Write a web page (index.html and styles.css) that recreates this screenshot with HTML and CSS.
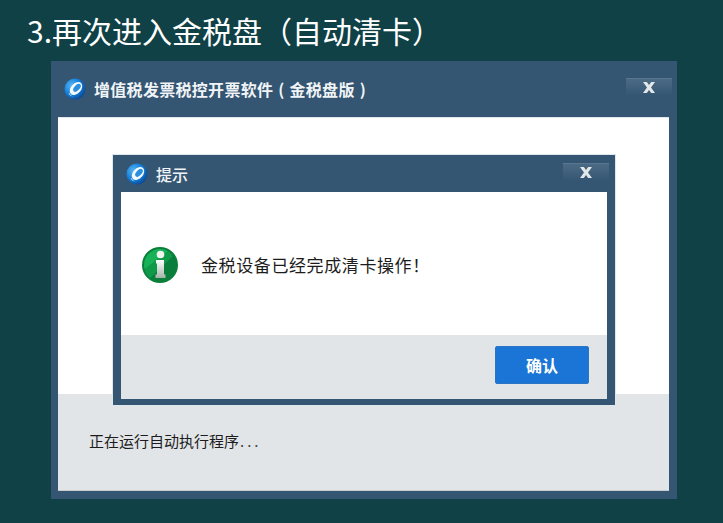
FILE: index.html
```html
<!DOCTYPE html>
<html lang="zh-CN">
<head>
<meta charset="utf-8">
<title>再次进入金税盘</title>
<link rel="stylesheet" href="styles.css">
</head>
<body>
<svg class="defs" width="0" height="0" aria-hidden="true">
  <defs>
    <radialGradient id="orb" cx="35%" cy="35%" r="75%">
      <stop offset="0" stop-color="#5db8f2"/>
      <stop offset=".55" stop-color="#137fdc"/>
      <stop offset="1" stop-color="#0a3f86"/>
    </radialGradient>
    <symbol id="logo" viewBox="0 0 22 22">
      <circle cx="11" cy="11" r="10.500" fill="url(#orb)"/>
      <ellipse cx="12" cy="10.500" rx="7.500" ry="5" transform="rotate(-48 12 10.500)" fill="#f4fbff"/>
      <ellipse cx="13" cy="9.800" rx="4.800" ry="2.600" transform="rotate(-48 13 9.800)" fill="#2a8fe0"/>
      <path d="M4.500 15.500c1 2.200 3 3.200 5.500 3-2-.3-3.600-1.300-4.300-3.500z" fill="#9ed6f8"/>
    </symbol>
    <symbol id="close" viewBox="0 0 12 11">
      <path d="M0 0h3.800L6 3 8.200 0H12L8 5.500 12 11H8.200L6 8 3.800 11H0L4 5.500z" fill="#e4e7ea"/>
    </symbol>
  </defs>
</svg>

<h1 class="heading">3.再次进入金税盘（自动清卡）</h1>

<section class="window">
  <header class="titlebar">
    <svg class="logo"><use href="#logo"/></svg>
    <span class="title">增值税发票税控开票软件 ( 金税盘版 )</span>
    <span class="close"><svg class="close-x"><use href="#close"/></svg></span>
  </header>
  <div class="window-body">
    <div class="window-white"></div>
    <footer class="window-footer">正在运行自动执行程序<span class="dots">...</span></footer>
  </div>

  <section class="dialog">
    <header class="dialog-bar">
      <svg class="logo"><use href="#logo"/></svg>
      <span class="dialog-title">提示</span>
      <span class="close"><svg class="close-x"><use href="#close"/></svg></span>
    </header>
    <div class="dialog-body">
      <div class="message">
        <svg class="info" viewBox="0 0 36 36">
          <defs>
            <linearGradient id="stem" x1="0" y1="0" x2="0" y2="1">
              <stop offset="0" stop-color="#fff"/>
              <stop offset="1" stop-color="#a3b3a8"/>
            </linearGradient>
          </defs>
          <circle cx="18" cy="18" r="18" fill="#0a7f3c"/>
          <path d="M18 2A16 16 0 0 0 2 18c0 1.500.2 3 .6 4.500L26 4.200A16 16 0 0 0 18 2z" fill="#17b257"/>
          <path d="M2.600 22.500 26 4.200c2 1.300 3.600 3 4.800 5L8 31C5.400 29 3.500 26 2.600 22.500z" fill="#0f9a4a"/>
          <circle cx="18.500" cy="7.500" r="3.800" fill="#f0f5f0"/>
          <path d="M14 13h8v14.500h1.500V31h-10v-3.500H15v-11h-1z" fill="url(#stem)"/>
        </svg>
        <span class="message-text">金税设备已经完成清卡操作！</span>
      </div>
      <div class="actions">
        <button class="confirm" type="button">确认</button>
      </div>
    </div>
  </section>
</section>
</body>
</html>
```

FILE: styles.css
```css
* { box-sizing: border-box; }

html, body { height: 100%; }

body {
  margin: 0;
  background: #0f4146;
  font-family: "Noto Sans CJK SC", "Noto Sans", sans-serif;
  overflow: hidden;
}

.defs { position: absolute; }

.heading {
  margin: 0;
  padding: 8px 0 0 27px;
  height: 61px;
  color: #fff;
  font-size: 30px;
  line-height: 44px;
  font-weight: 400;
  white-space: nowrap;
}

.window {
  position: relative;
  width: 626px;
  height: 438px;
  margin-left: 51px;
  background: #345673;
  padding: 0 8px 8px 7px;
  display: flex;
  flex-direction: column;
}

.titlebar {
  height: 56px;
  flex: none;
  display: flex;
  align-items: center;
  padding-left: 6px;
  padding-bottom: 1px;
}

.logo {
  width: 22px;
  height: 22px;
  flex: none;
}

.title {
  margin-left: 8px;
  color: #f1f4f6;
  font-size: 16px;
  font-weight: 700;
  letter-spacing: .3px;
  word-spacing: 1px;
  white-space: nowrap;
}

.close {
  margin-left: auto;
  width: 46px;
  height: 18px;
  display: flex;
  align-items: center;
  justify-content: center;
  background: linear-gradient(#4d6b85, #345673);
  box-shadow: inset 0 1px 0 #587690;
  align-self: flex-start;
}

.titlebar .close { margin-top: 17px; margin-right: -3px; }

.close-x { width: 12px; height: 11px; }

.window-body {
  flex: 1;
  display: flex;
  flex-direction: column;
  border-top: 1px solid #dfe6ec;
}

.window-white { flex: 1; background: #fff; }

.window-footer {
  height: 97px;
  flex: none;
  background: #e2e5e8;
  border-bottom: 1px solid #c9ccce;
  padding: 36px 0 0 31px;
  color: #1c1c1c;
  font-size: 15px;
  line-height: 21px;
}

.dots { letter-spacing: 3px; margin-left: 1px; color: #444; }

.dialog {
  position: absolute;
  left: 62px;
  top: 94px;
  width: 502px;
  height: 250px;
  background: #345673;
  box-shadow: 0 0 0 1px #dfe6ec;
  padding: 0 8px 6px;
  display: flex;
  flex-direction: column;
}

.dialog-bar {
  height: 37px;
  flex: none;
  display: flex;
  align-items: center;
  padding-left: 5px;
  color: #f1f4f6;
}

.dialog-title {
  margin-left: 8px;
  font-size: 16px;
  font-weight: 500;
}

.dialog-bar .close { margin-top: 8px; margin-right: -2px; }

.dialog-body {
  flex: 1;
  display: flex;
  flex-direction: column;
  background: #fff;
}

.message {
  height: 143px;
  flex: none;
  display: flex;
  align-items: flex-start;
  padding: 54px 0 0 21px;
}

.info { width: 36px; height: 36px; flex: none; margin-top: 1px; }

.message-text {
  margin: 7px 0 0 23px;
  color: #1c1c1c;
  font-size: 17px;
  letter-spacing: .6px;
  line-height: 24px;
}

.actions {
  flex: 1;
  display: flex;
  justify-content: flex-end;
  align-items: flex-start;
  background: #e2e5e8;
  padding: 11px 18px 0 0;
}

.confirm {
  width: 94px;
  height: 38px;
  border: 1px solid #2a76c4;
  border-radius: 2px;
  background: #1a75d6;
  color: #fff;
  font-family: inherit;
  font-size: 16px;
  font-weight: 700;
  padding: 0;
}
```
